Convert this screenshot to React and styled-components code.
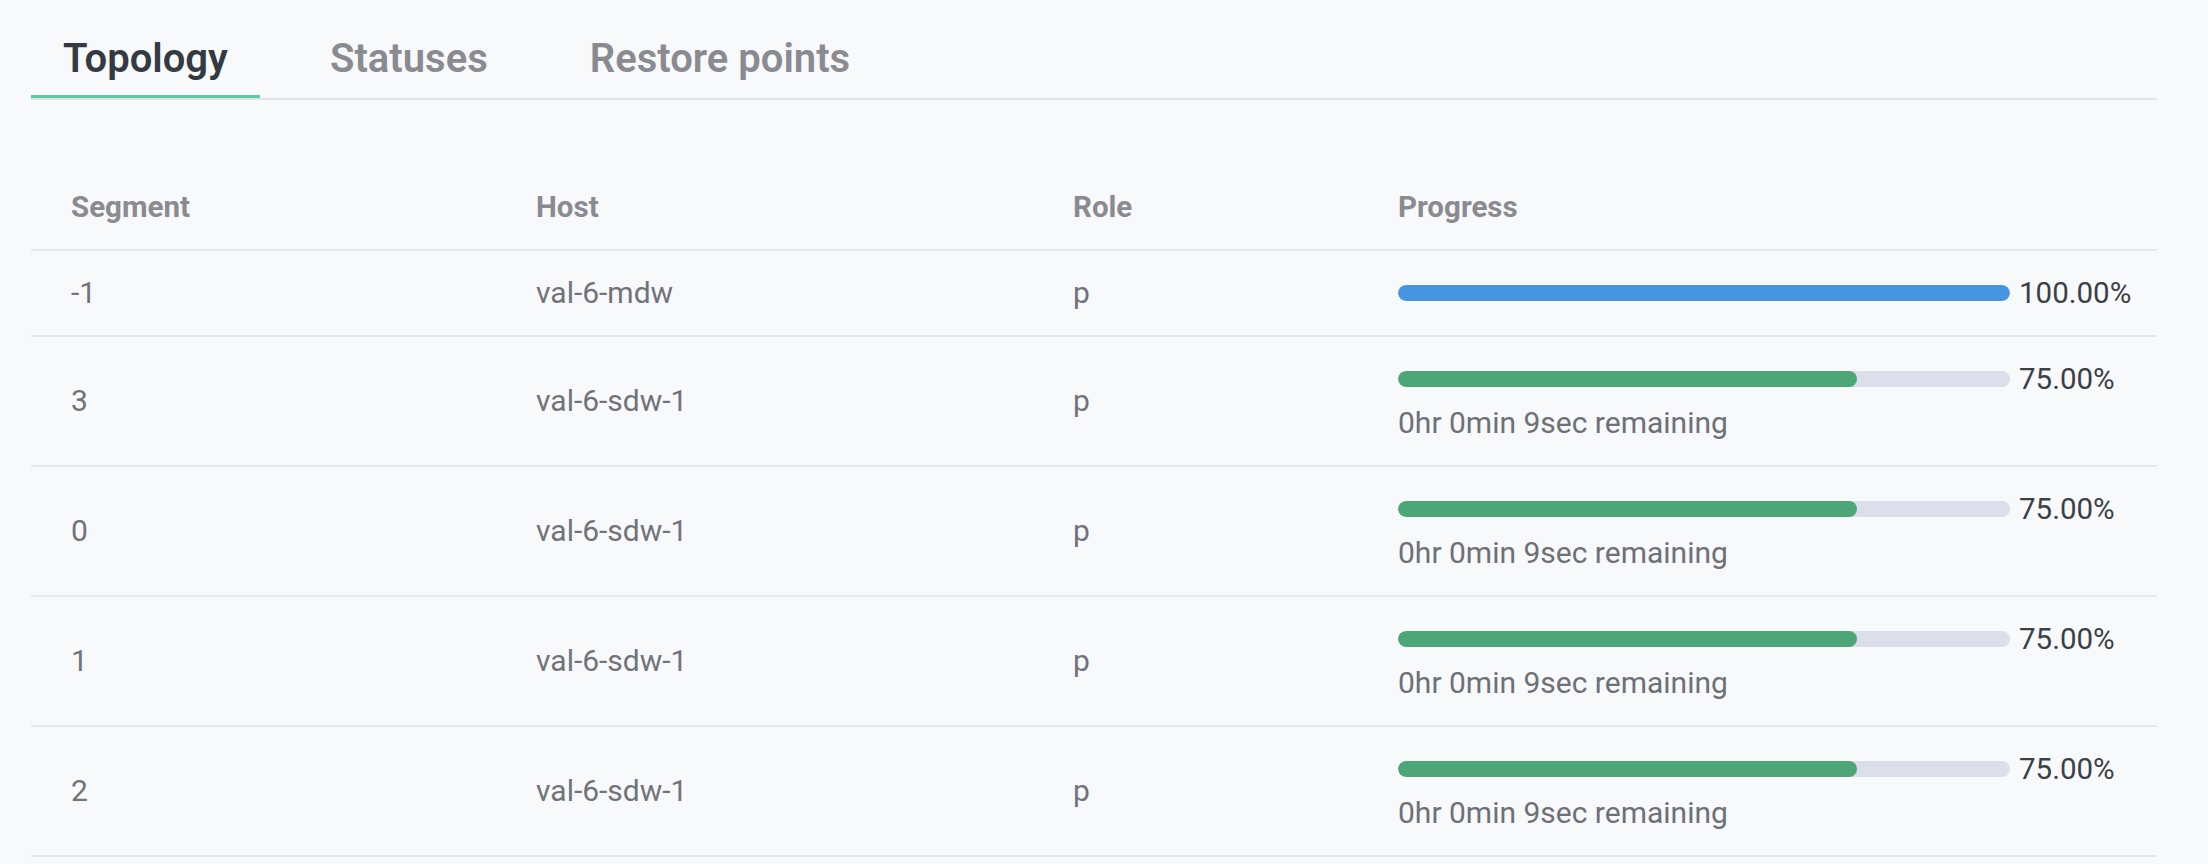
import React from 'react';
import styled, { createGlobalStyle } from 'styled-components';

const rows = [
    { segment: '-1', host: 'val-6-mdw', role: 'p', progress: 100, remaining: null },
    { segment: '3', host: 'val-6-sdw-1', role: 'p', progress: 75, remaining: '0hr 0min 9sec remaining' },
    { segment: '0', host: 'val-6-sdw-1', role: 'p', progress: 75, remaining: '0hr 0min 9sec remaining' },
    { segment: '1', host: 'val-6-sdw-1', role: 'p', progress: 75, remaining: '0hr 0min 9sec remaining' },
    { segment: '2', host: 'val-6-sdw-1', role: 'p', progress: 75, remaining: '0hr 0min 9sec remaining' },
];

const tabs = ['Topology', 'Statuses', 'Restore points'];

export default function App() {
    return (
        <>
            <GlobalStyle />
            <Page>
                <TabList>
                    {tabs.map((tab, index) => (
                        <Tab key={tab} active={index === 0}>
                            {tab}
                        </Tab>
                    ))}
                </TabList>
                <Table>
                    <HeadRow>
                        <HeadCell>Segment</HeadCell>
                        <HeadCell>Host</HeadCell>
                        <HeadCell>Role</HeadCell>
                        <HeadCell>Progress</HeadCell>
                    </HeadRow>
                    {rows.map((row, index) => (
                        <Row key={index}>
                            <Cell>{row.segment}</Cell>
                            <Cell>{row.host}</Cell>
                            <Cell>{row.role}</Cell>
                            <ProgressCell>
                                <BarLine>
                                    <Track>
                                        <Fill done={row.progress === 100} style={{ width: `${row.progress}%` }} />
                                    </Track>
                                    <Percent>{row.progress.toFixed(2)}%</Percent>
                                </BarLine>
                                {row.remaining && <Remaining>{row.remaining}</Remaining>}
                            </ProgressCell>
                        </Row>
                    ))}
                </Table>
            </Page>
        </>
    );
}

const GlobalStyle = createGlobalStyle`
    body {
        margin: 0;
        background: #f8f9fb;
        font-family: Roboto, 'Liberation Sans', sans-serif;
    }
`;

const Page = styled.div`
    padding: 35px 51px 0 31px;
`;

const TabList = styled.div`
    display: flex;
    gap: 38px;
    border-bottom: 2px solid #e0e2e6;
`;

const Tab = styled.div`
    padding: 0 32px 12px;
    font-size: 40px;
    line-height: 48px;
    font-weight: 600;
    color: ${({ active }) => (active ? '#343a42' : '#898b91')};
    border-bottom: 3px solid ${({ active }) => (active ? '#5ccba0' : 'transparent')};
    cursor: pointer;
`;

const Table = styled.div`
    margin-top: 65px;
`;

const grid = `
    display: grid;
    grid-template-columns: 465px 537px 325px 1fr;
    align-items: center;
    border-bottom: 2px solid #e5e9ee;
`;

const HeadRow = styled.div`
    ${grid}
`;

const Row = styled.div`
    ${grid}
`;

const HeadCell = styled.div`
    padding: 24px 40px;
    font-size: 29.5px;
    line-height: 36px;
    font-weight: 700;
    color: #898b91;
`;

const Cell = styled.div`
    padding: 24px 40px;
    font-size: 30px;
    line-height: 36px;
    color: #717379;
`;

const ProgressCell = styled.div`
    display: flex;
    flex-direction: column;
    gap: 8px;
    padding: 24px 40px;
`;

const BarLine = styled.div`
    display: flex;
    align-items: center;
    height: 36px;
`;

const Track = styled.div`
    width: 612px;
    height: 16px;
    border-radius: 8px;
    background: #dcdeec;
    overflow: hidden;
`;

const Fill = styled.div`
    height: 100%;
    border-radius: 8px;
    background: ${({ done }) => (done ? '#4695e0' : '#4ca678')};
`;

const Percent = styled.span`
    margin-left: 9px;
    font-size: 29.5px;
    line-height: 36px;
    color: #3b3f46;
`;

const Remaining = styled.div`
    font-size: 30px;
    line-height: 36px;
    color: #6e7077;
`;
